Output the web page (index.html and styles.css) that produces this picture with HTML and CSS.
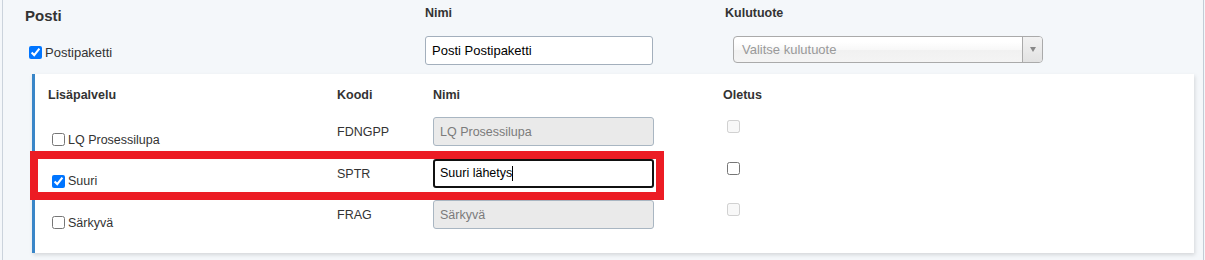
FILE: index.html
```html
<!DOCTYPE html>
<html lang="fi">
<head>
<meta charset="utf-8">
<title>Posti</title>
<link rel="stylesheet" href="styles.css">
</head>
<body>
<div class="card">
  <div class="top">
    <div class="title">Posti</div>
    <div class="col-head">Nimi</div>
    <div class="col-head">Kulutuote</div>
    <label class="check main-check"><input type="checkbox" checked>Postipaketti</label>
    <div><input class="text" type="text" value="Posti Postipaketti"></div>
    <div class="select-wrap">
      <div class="select">
        <span class="placeholder">Valitse kulutuote</span>
        <span class="arrow"><span class="tri"></span></span>
      </div>
    </div>
  </div>

  <div class="panel">
    <div class="grid">
      <div class="th">Lisäpalvelu</div>
      <div class="th">Koodi</div>
      <div class="th">Nimi</div>
      <div class="th">Oletus</div>

      <div class="c-label"><label class="check"><input type="checkbox">LQ Prosessilupa</label></div>
      <div class="code">FDNGPP</div>
      <div><input class="field" type="text" value="LQ Prosessilupa" disabled></div>
      <div class="c-def"><input type="checkbox" disabled></div>

      <div class="c-label"><label class="check"><input type="checkbox" checked>Suuri</label></div>
      <div class="code">SPTR</div>
      <div><div class="field focused">Suuri lähetys<span class="caret"></span></div></div>
      <div class="c-def"><input type="checkbox"></div>

      <div class="c-label"><label class="check"><input type="checkbox">Särkyvä</label></div>
      <div class="code">FRAG</div>
      <div><input class="field" type="text" value="Särkyvä" disabled></div>
      <div class="c-def"><input type="checkbox" disabled></div>
    </div>
    <div class="highlight"></div>
  </div>
</div>
</body>
</html>
```

FILE: styles.css
```css
html, body {
  margin: 0;
  padding: 0;
  background: #f4f7fa;
}
body {
  font-family: "Liberation Sans", Arial, sans-serif;
  color: #333;
  font-size: 12.5px;
}
.card {
  margin: 0 1px 0 2px;
  border-left: 1px solid #cbd3dc;
  border-right: 1px solid #c3ccd6;
  min-height: 260px;
  background: #f4f7fa;
}
.top {
  display: grid;
  grid-template-columns: 400px 300px 1fr;
  row-gap: 12px;
  padding-left: 22px;
  align-items: start;
}
.title {
  margin-top: 7px;
  font-size: 15px;
  line-height: 17px;
  font-weight: bold;
  color: #333;
}
.col-head {
  margin-top: 5px;
  font-size: 12.5px;
  line-height: 16px;
  font-weight: bold;
}
.check {
  display: flex;
  align-items: center;
  line-height: 16px;
  font-size: 12.5px;
  color: #333;
}
.check input, .c-def input {
  width: 13px;
  height: 13px;
  margin: 3px 3px 3px 4px;
}
.main-check {
  margin-top: 7px;
  font-size: 13px;
}
.text {
  box-sizing: border-box;
  width: 228px;
  height: 29px;
  border: 1px solid #a3afbc;
  border-radius: 3px;
  padding: 0 6px;
  font-family: "Liberation Sans", Arial, sans-serif;
  font-size: 13px;
  color: #000;
  background: #fff;
  margin: 0;
}
.select-wrap {
  padding-left: 8px;
}
.select {
  box-sizing: border-box;
  width: 310px;
  height: 27px;
  border: 1px solid #aaa;
  border-radius: 4px;
  background: linear-gradient(#fff 20%, #f8f8f8 50%, #f1f1f1 52%, #f4f4f4 100%);
  display: flex;
  align-items: center;
  padding-left: 8px;
}
.placeholder {
  font-size: 13px;
  color: #999;
}
.arrow {
  margin-left: auto;
  width: 19px;
  align-self: stretch;
  border-left: 1px solid #aaa;
  border-radius: 0 3px 3px 0;
  background: linear-gradient(#f2f2f2, #e2e2e2);
  display: flex;
  align-items: center;
  justify-content: center;
}
.tri {
  width: 0;
  height: 0;
  border-left: 3.5px solid transparent;
  border-right: 3.5px solid transparent;
  border-top: 5px solid #888;
}
.panel {
  position: relative;
  box-sizing: border-box;
  width: 1162px;
  margin: 9px 0 0 29px;
  background: #fff;
  border-left: 3px solid #3a86c8;
  padding: 13px 0 11.5px 13px;
  box-shadow: 1px 2px 4px rgba(0, 0, 0, 0.13);
}
.grid {
  display: grid;
  grid-template-columns: 289px 96px 290px 1fr;
  grid-template-rows: 30px repeat(3, 41.5px);
  align-items: start;
}
.th {
  font-weight: bold;
  line-height: 16px;
  font-size: 12.5px;
}
.c-label {
  padding-top: 13px;
}
.code {
  padding-top: 7px;
  line-height: 16px;
  color: #333;
}
.field {
  box-sizing: border-box;
  width: 221px;
  height: 29px;
  margin: 0;
  border: 1px solid #a9b6c2;
  border-radius: 3px;
  padding: 0 6px;
  font-family: "Liberation Sans", Arial, sans-serif;
  font-size: 12.5px;
}
.field:disabled {
  background: #eaeaea;
  color: #7b7b7b;
}
.focused {
  display: flex;
  align-items: center;
  border: 2px solid #111;
  padding-left: 5px;
  background: #fff;
  color: #000;
}
.caret {
  display: inline-block;
  width: 1px;
  height: 15px;
  background: #000;
}
.highlight {
  position: absolute;
  left: -5px;
  top: 77px;
  width: 634px;
  height: 49px;
  box-sizing: border-box;
  border: 8px solid #ec1c24;
  pointer-events: none;
}
```
